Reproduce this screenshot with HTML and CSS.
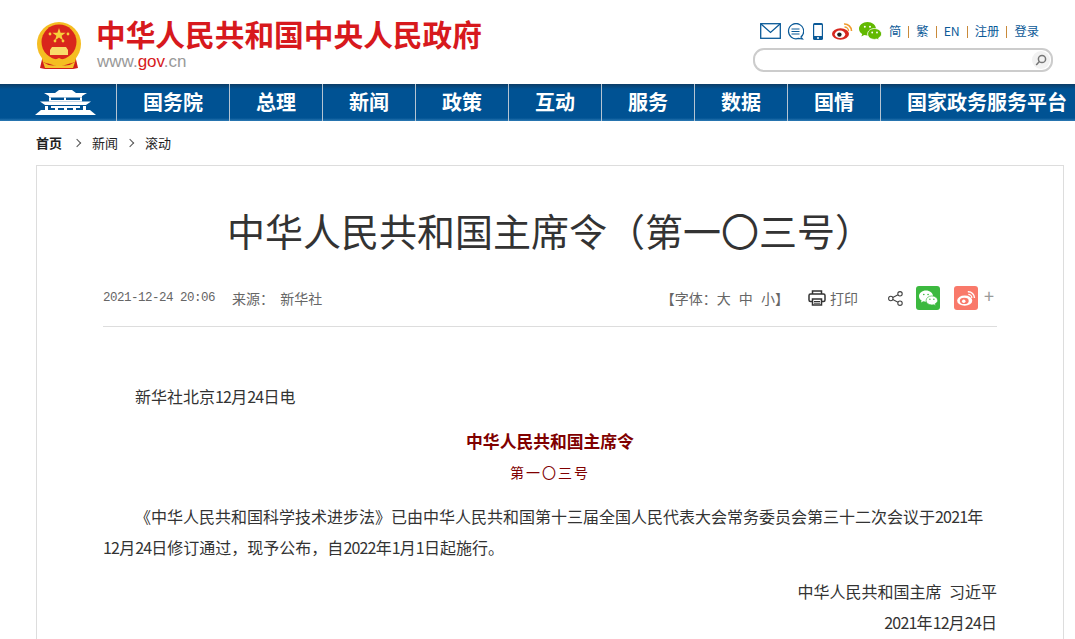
FILE: index.html
```html
<!DOCTYPE html>
<html lang="zh-CN">
<head>
  <meta charset="UTF-8">
  <title>中华人民共和国主席令（第一〇三号）</title>
  <link rel="stylesheet" href="styles.css">
</head>
<body>
  <!-- Header -->
  <div class="header">
    <div class="logo">
      <svg class="emblem" width="44" height="48" viewBox="0 0 44 48">
        <path d="M6 33 L3 46 L8 47 L36 47 L41 46 L38 33 Z" fill="#d01f1c"/>
        <path d="M6 40 Q14 46 22 42 Q30 46 38 40 L36 46 L8 46 Z" fill="#f5c22c"/>
        <circle cx="22" cy="22" r="22" fill="#f5bd22"/>
        <circle cx="22" cy="20" r="17.5" fill="#d9261c"/>
        <polygon points="22,6 23.6,10.8 28.6,10.8 24.6,13.8 26.1,18.6 22,15.6 17.9,18.6 19.4,13.8 15.4,10.8 20.4,10.8" fill="#f7cf3a"/>
        <circle cx="13" cy="12" r="1.4" fill="#f7cf3a"/>
        <circle cx="31" cy="12" r="1.4" fill="#f7cf3a"/>
        <circle cx="18" cy="19" r="1.4" fill="#f7cf3a"/>
        <circle cx="26" cy="19" r="1.4" fill="#f7cf3a"/>
        <path d="M15 25 L29 25 L31 28 L31 33 L13 33 L13 28 Z" fill="#f9dc6a"/>
        <path d="M4 33 Q12 42 22 36 Q32 42 40 33 L38 40 Q30 44 22 39 Q14 44 6 40 Z" fill="#f5bd22"/>
      </svg>
      <div class="logo-text">
        <div class="logo-title">中华人民共和国中央人民政府</div>
        <div class="logo-url">www.<span class="red">gov</span>.cn</div>
      </div>
    </div>
    <div class="tools">
      <div class="tool-row">
        <svg class="tool-icon" width="21" height="16" viewBox="0 0 21 16" fill="none" stroke="#0b5a98" stroke-width="1.3">
          <rect x="0.7" y="0.7" width="19.6" height="14.6"/>
          <path d="M1 1 L10.5 9.5 L20 1"/>
        </svg>
        <svg class="tool-icon wide" width="17" height="17" viewBox="0 0 17 17" fill="none" stroke="#0b5a98" stroke-width="1.2">
          <path d="M14 14 A7.6 7.6 0 1 0 11.5 15.4 L15.5 16 Z"/>
          <path d="M4.5 6 H12.5 M4.5 8.5 H12.5 M4.5 11 H12.5"/>
        </svg>
        <svg class="tool-icon wide" width="10" height="17" viewBox="0 0 10 17">
          <rect width="10" height="17" rx="1.5" fill="#0b5a98"/>
          <rect x="1.2" y="2" width="7.6" height="11" fill="#fff"/>
          <circle cx="5" cy="15" r="1" fill="#fff"/>
        </svg>
        <svg class="tool-icon" width="21" height="18" viewBox="0 0 21 18">
          <ellipse cx="8.5" cy="12" rx="8.5" ry="5.7" fill="#d7281f"/>
          <ellipse cx="8" cy="12.3" rx="5.2" ry="3.7" fill="#fff"/>
          <circle cx="7.4" cy="12.6" r="2.2" fill="#222"/>
          <path d="M12 2 A7 7 0 0 1 19.5 9" fill="none" stroke="#f09a2c" stroke-width="1.6"/>
          <path d="M12.5 5 A4 4 0 0 1 16.5 9" fill="none" stroke="#f09a2c" stroke-width="1.4"/>
        </svg>
        <svg class="tool-icon wechat" width="23" height="18" viewBox="0 0 23 18">
          <path d="M8.5 0 C3.8 0 0 3 0 6.8 C0 9 1.2 10.8 3.2 12 L2.4 14.4 L5.2 13 C6.2 13.3 7.3 13.5 8.5 13.5 C13.2 13.5 17 10.5 17 6.8 C17 3 13.2 0 8.5 0 Z" fill="#62b900"/>
          <path d="M15.5 6.5 C11.6 6.5 8.6 9 8.6 12 C8.6 15 11.6 17.4 15.5 17.4 C16.3 17.4 17 17.3 17.8 17.1 L20.2 18 L19.6 16 C21.4 14.9 22.6 13.5 22.6 12 C22.6 9 19.4 6.5 15.5 6.5 Z" fill="#62b900" stroke="#fff" stroke-width="0.8"/>
          <circle cx="5.8" cy="4.8" r="1" fill="#fff"/>
          <circle cx="11" cy="4.8" r="1" fill="#fff"/>
          <circle cx="13.2" cy="10.5" r="0.9" fill="#fff"/>
          <circle cx="18" cy="10.5" r="0.9" fill="#fff"/>
        </svg>
        <a class="tool-link">简</a><span class="sep"></span>
        <a class="tool-link">繁</a><span class="sep"></span>
        <a class="tool-link">EN</a><span class="sep"></span>
        <a class="tool-link">注册</a><span class="sep"></span>
        <a class="tool-link">登录</a>
      </div>
      <div class="search">
        <span class="search-btn">
          <svg width="12" height="12" viewBox="0 0 12 12" fill="none" stroke="#777" stroke-width="1.5">
            <circle cx="7" cy="5" r="3.6"/>
            <path d="M4.4 7.6 L1.2 11"/>
          </svg>
        </span>
      </div>
    </div>
  </div>

  <!-- Nav -->
  <div class="nav">
    <div class="nav-home">
      <svg width="61" height="25" viewBox="0 0 61 25" fill="#fff">
        <path d="M9 3 L20 3 L24 0 L37 0 L41 3 L52 3 L47 6 L14 6 Z"/>
        <rect x="14" y="6" width="33" height="1.5"/>
        <rect x="14" y="7.5" width="2" height="3"/>
        <rect x="29" y="7.5" width="2" height="3"/>
        <rect x="45" y="7.5" width="2" height="3"/>
        <rect x="14" y="10" width="33" height="1.5"/>
        <path d="M5 11.5 L56 11.5 L51 15 L10 15 Z"/>
        <rect x="10" y="16" width="3" height="4"/>
        <rect x="48" y="16" width="3" height="4"/>
        <rect x="16" y="16" width="29" height="2"/>
        <rect x="20" y="18" width="3" height="3"/>
        <rect x="29" y="18" width="3" height="3"/>
        <rect x="38" y="18" width="3" height="3"/>
        <path d="M6 20 L55 20 L61 25 L0 25 Z"/>
      </svg>
    </div>
    <a class="nav-item">国务院</a>
    <a class="nav-item">总理</a>
    <a class="nav-item">新闻</a>
    <a class="nav-item">政策</a>
    <a class="nav-item">互动</a>
    <a class="nav-item">服务</a>
    <a class="nav-item">数据</a>
    <a class="nav-item">国情</a>
    <a class="nav-item">国家政务服务平台</a>
  </div>

  <!-- Breadcrumb -->
  <div class="crumbs">
    <a class="crumb-first">首页</a>
    <span class="crumb-arrow"></span>
    <a>新闻</a>
    <span class="crumb-arrow"></span>
    <a>滚动</a>
  </div>

  <!-- Article -->
  <div class="article">
    <h1 class="article-title">中华人民共和国主席令（第一〇三号）</h1>
    <div class="meta">
      <span class="meta-date">2021-12-24 20:06</span>
      <span class="meta-source">来源： <span class="meta-name">新华社</span></span>
      <span class="meta-font">【字体：大 中 小】</span>
      <span class="meta-print">
        <svg width="18" height="16" viewBox="0 0 18 16" fill="none" stroke="#333" stroke-width="1.5">
          <path d="M4.5 4 V1 H13.5 V4"/>
          <rect x="1" y="4" width="16" height="7.5" rx="1.5"/>
          <rect x="4.5" y="9" width="9" height="6" fill="#fff"/>
          <path d="M6 11.5 H12 M6 13.2 H12" stroke-width="1"/>
        </svg>
        打印
      </span>
      <svg class="meta-share" width="15" height="15" viewBox="0 0 15 15" fill="none" stroke="#444" stroke-width="1.1">
        <circle cx="12" cy="2.8" r="2.2"/>
        <circle cx="12" cy="12.2" r="2.2"/>
        <circle cx="2.8" cy="7.5" r="2.2"/>
        <path d="M4.8 6.5 L10 3.8 M4.8 8.5 L10 11.2"/>
      </svg>
      <span class="share-tile tile-green">
        <svg width="19" height="16" viewBox="0 0 23 18">
          <path d="M8.5 0 C3.8 0 0 3 0 6.8 C0 9 1.2 10.8 3.2 12 L2.4 14.4 L5.2 13 C6.2 13.3 7.3 13.5 8.5 13.5 C13.2 13.5 17 10.5 17 6.8 C17 3 13.2 0 8.5 0 Z" fill="#fff"/>
          <path d="M15.5 6.5 C11.6 6.5 8.6 9 8.6 12 C8.6 15 11.6 17.4 15.5 17.4 C16.3 17.4 17 17.3 17.8 17.1 L20.2 18 L19.6 16 C21.4 14.9 22.6 13.5 22.6 12 C22.6 9 19.4 6.5 15.5 6.5 Z" fill="#fff" stroke="#3cb93f" stroke-width="0.8"/>
          <circle cx="5.8" cy="4.8" r="1" fill="#3cb93f"/>
          <circle cx="11" cy="4.8" r="1" fill="#3cb93f"/>
          <circle cx="13.2" cy="10.5" r="0.9" fill="#3cb93f"/>
          <circle cx="18" cy="10.5" r="0.9" fill="#3cb93f"/>
        </svg>
      </span>
      <span class="share-tile tile-red">
        <svg width="19" height="16" viewBox="0 0 21 18">
          <ellipse cx="8.5" cy="12" rx="8.5" ry="5.7" fill="#fff"/>
          <ellipse cx="8" cy="12.3" rx="5" ry="3.5" fill="#f9796a"/>
          <circle cx="7.4" cy="12.6" r="2" fill="#fff"/>
          <path d="M12 2 A7 7 0 0 1 19.5 9" fill="none" stroke="#fff" stroke-width="1.6"/>
          <path d="M12.5 5 A4 4 0 0 1 16.5 9" fill="none" stroke="#fff" stroke-width="1.4"/>
        </svg>
      </span>
      <span class="meta-plus">+</span>
    </div>
    <div class="content">
      <p class="indent">新华社北京<span class="num">12</span>月<span class="num">24</span>日电</p>
      <p class="order-title">中华人民共和国主席令</p>
      <p class="order-no">第一〇三号</p>
      <p class="indent">《中华人民共和国科学技术进步法》已由中华人民共和国第十三届全国人民代表大会常务委员会第三十二次会议于<span class="num">2021</span>年<span class="num">12</span>月<span class="num">24</span>日修订通过，现予公布，自<span class="num">2022</span>年<span class="num">1</span>月<span class="num">1</span>日起施行。</p>
      <p class="sign sign-name">中华人民共和国主席 习近平</p>
      <p class="sign sign-date"><span class="num">2021</span>年<span class="num">12</span>月<span class="num">24</span>日</p>
    </div>
  </div>
</body>
</html>
```

FILE: styles.css
```css
html, body {
  height: 100%;
  overflow: hidden;
}

body {
  margin: 0;
  font-family: "Noto Sans CJK SC", "Liberation Sans", sans-serif;
  background-color: #fff;
  color: #333;
}

.header {
  display: flex;
  justify-content: space-between;
  height: 84px;
}

.logo {
  display: flex;
  padding: 22px 0 0 37px;
}

.logo-text {
  margin-left: 15px;
  margin-top: -2px;
}

.logo-title {
  font-family: "Liberation Sans", "Noto Sans CJK SC", sans-serif;
  font-size: 29.7px;
  line-height: 31px;
  font-weight: bold;
  color: #d7191d;
}

.logo-url {
  margin-top: 3px;
  margin-left: 1px;
  font-family: "Liberation Sans", sans-serif;
  font-size: 17px;
  line-height: 16px;
  color: #999;
}

.red {
  color: #d7191d;
}

.tools {
  width: 300px;
  margin-right: 22px;
  padding: 21px 0 0 0;
}

.tool-row {
  display: flex;
  align-items: center;
  height: 20px;
  padding-left: 7px;
  font-size: 12.3px;
  color: #0b5a98;
}

.tool-icon {
  margin-right: 6px;
  flex: none;
}

.tool-icon.wide {
  margin-right: 9px;
}

.tool-icon.wechat {
  margin-right: 7px;
}

.tool-link {
  line-height: 22px;
}

.sep {
  width: 1px;
  height: 12px;
  margin: 1px 7px 0;
  background-color: #c98a3a;
}

.search {
  display: flex;
  justify-content: flex-end;
  height: 18px;
  margin-top: 7px;
  padding: 1px;
  border: 2px solid #ccc;
  border-radius: 11px;
}

.search-btn {
  display: flex;
  align-items: center;
  justify-content: center;
  width: 18px;
  height: 18px;
  border-radius: 50%;
  background-color: #f2f2f2;
}

.nav {
  display: flex;
  height: 37px;
  overflow: hidden;
  background: linear-gradient(#0c3c66 0, #005293 5px, #005293 34px, #2e7ab4 37px);
}

.nav-home {
  display: flex;
  align-items: center;
  flex: none;
  width: 116px;
  padding-left: 35px;
  box-sizing: border-box;
}

.nav-item {
  flex: none;
  padding: 0 26px;
  border-left: 1px solid #b5c4d2;
  font-size: 20px;
  line-height: 36px;
  font-weight: bold;
  color: #fff;
  white-space: nowrap;
}

.crumbs {
  display: flex;
  align-items: center;
  height: 43px;
  padding-left: 36px;
  font-size: 13px;
  color: #222;
}

.crumb-first {
  margin-right: 3px;
  font-weight: bold;
}

.crumb-arrow {
  width: 5px;
  height: 5px;
  margin: 0 12px 0 9px;
  border-top: 1px solid #555;
  border-right: 1px solid #555;
  transform: rotate(45deg);
}

.article {
  height: 600px;
  margin: 1px 11px 0 36px;
  padding: 0 66px;
  border: 1px solid #ddd;
}

.article-title {
  margin: 0;
  padding-top: 38px;
  font-size: 38px;
  line-height: 52px;
  font-weight: normal;
  text-align: center;
  color: #333;
}

.meta {
  display: flex;
  align-items: center;
  height: 56px;
  margin-top: 14px;
  border-bottom: 1px solid #ddd;
  font-size: 14px;
  color: #666;
}

.meta-date {
  font-family: "Liberation Mono", monospace;
  font-size: 12.5px;
  letter-spacing: -0.5px;
}

.meta-source {
  margin-left: 17px;
}

.meta-name {
  margin-left: 3px;
}

.meta-font {
  margin-left: auto;
  word-spacing: 5px;
}

.meta-print {
  display: flex;
  align-items: center;
  gap: 4px;
  margin-left: 19px;
}

.meta-share {
  margin-left: 30px;
}

.share-tile {
  display: flex;
  align-items: center;
  justify-content: center;
  width: 24px;
  height: 24px;
  margin-left: 13px;
  border-radius: 3px;
}

.tile-green {
  background-color: #3cb93f;
}

.tile-red {
  margin-left: 14px;
  background-color: #f9796a;
}

.meta-plus {
  margin: -6px 3px 0 6px;
  font-size: 18px;
  color: #999;
}

.content {
  padding-top: 54px;
  font-size: 16px;
  line-height: 31px;
  color: #333;
}

.content p {
  margin: 0;
}

.content .indent {
  text-indent: 32px;
}

.num {
  letter-spacing: -0.8px;
}

.content .order-title {
  margin-top: 14px;
  font-size: 16.8px;
  font-weight: bold;
  text-align: center;
  color: #800000;
}

.content .order-no {
  margin-bottom: 14px;
  font-size: 14px;
  line-height: 30px;
  letter-spacing: 2px;
  text-align: center;
  color: #800000;
}

.content .sign {
  text-align: right;
}

.content .sign-name {
  margin-top: 13px;
  word-spacing: 4px;
}

.content .sign-date {
  line-height: 30px;
}
```
